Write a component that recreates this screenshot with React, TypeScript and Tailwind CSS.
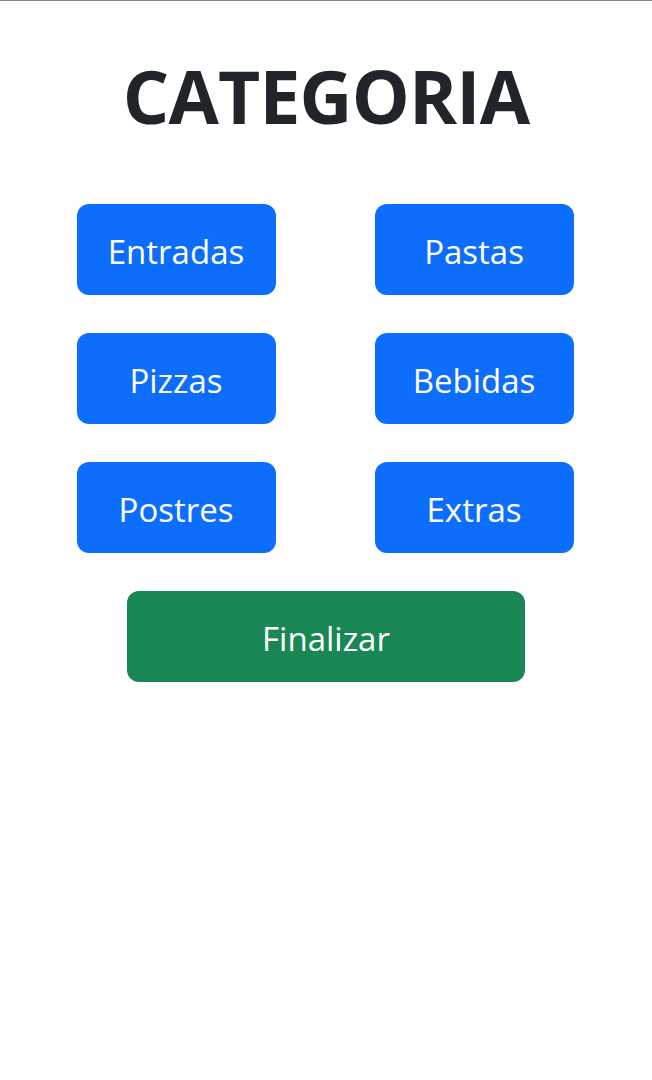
export default function App() {
  const categorias = ['Entradas', 'Pastas', 'Pizzas', 'Bebidas', 'Postres', 'Extras'];

  return (
    <div
      className="min-h-screen bg-white border-t border-[#8a8a8a] flex flex-col items-center"
      style={{ fontFamily: '"Open Sans", "Noto Sans", sans-serif' }}
    >
      <h1 className="mt-[51px] text-[73px] leading-[88px] font-bold text-[#212529] tracking-[-0.8px]">
        CATEGORIA
      </h1>

      <div className="mt-[64px] mr-[2px] grid grid-cols-2 gap-x-[99px] gap-y-[38px]">
        {categorias.map((c) => (
          <button
            key={c}
            className="w-[199px] h-[91px] pt-[5px] rounded-[12px] bg-[#0d6efd] text-white text-[33px] flex items-center justify-center"
          >
            {c}
          </button>
        ))}
      </div>

      <button className="mt-[38px] w-[398px] h-[91px] pt-[5px] rounded-[12px] bg-[#198754] text-white text-[33px] flex items-center justify-center">
        Finalizar
      </button>
    </div>
  );
}
